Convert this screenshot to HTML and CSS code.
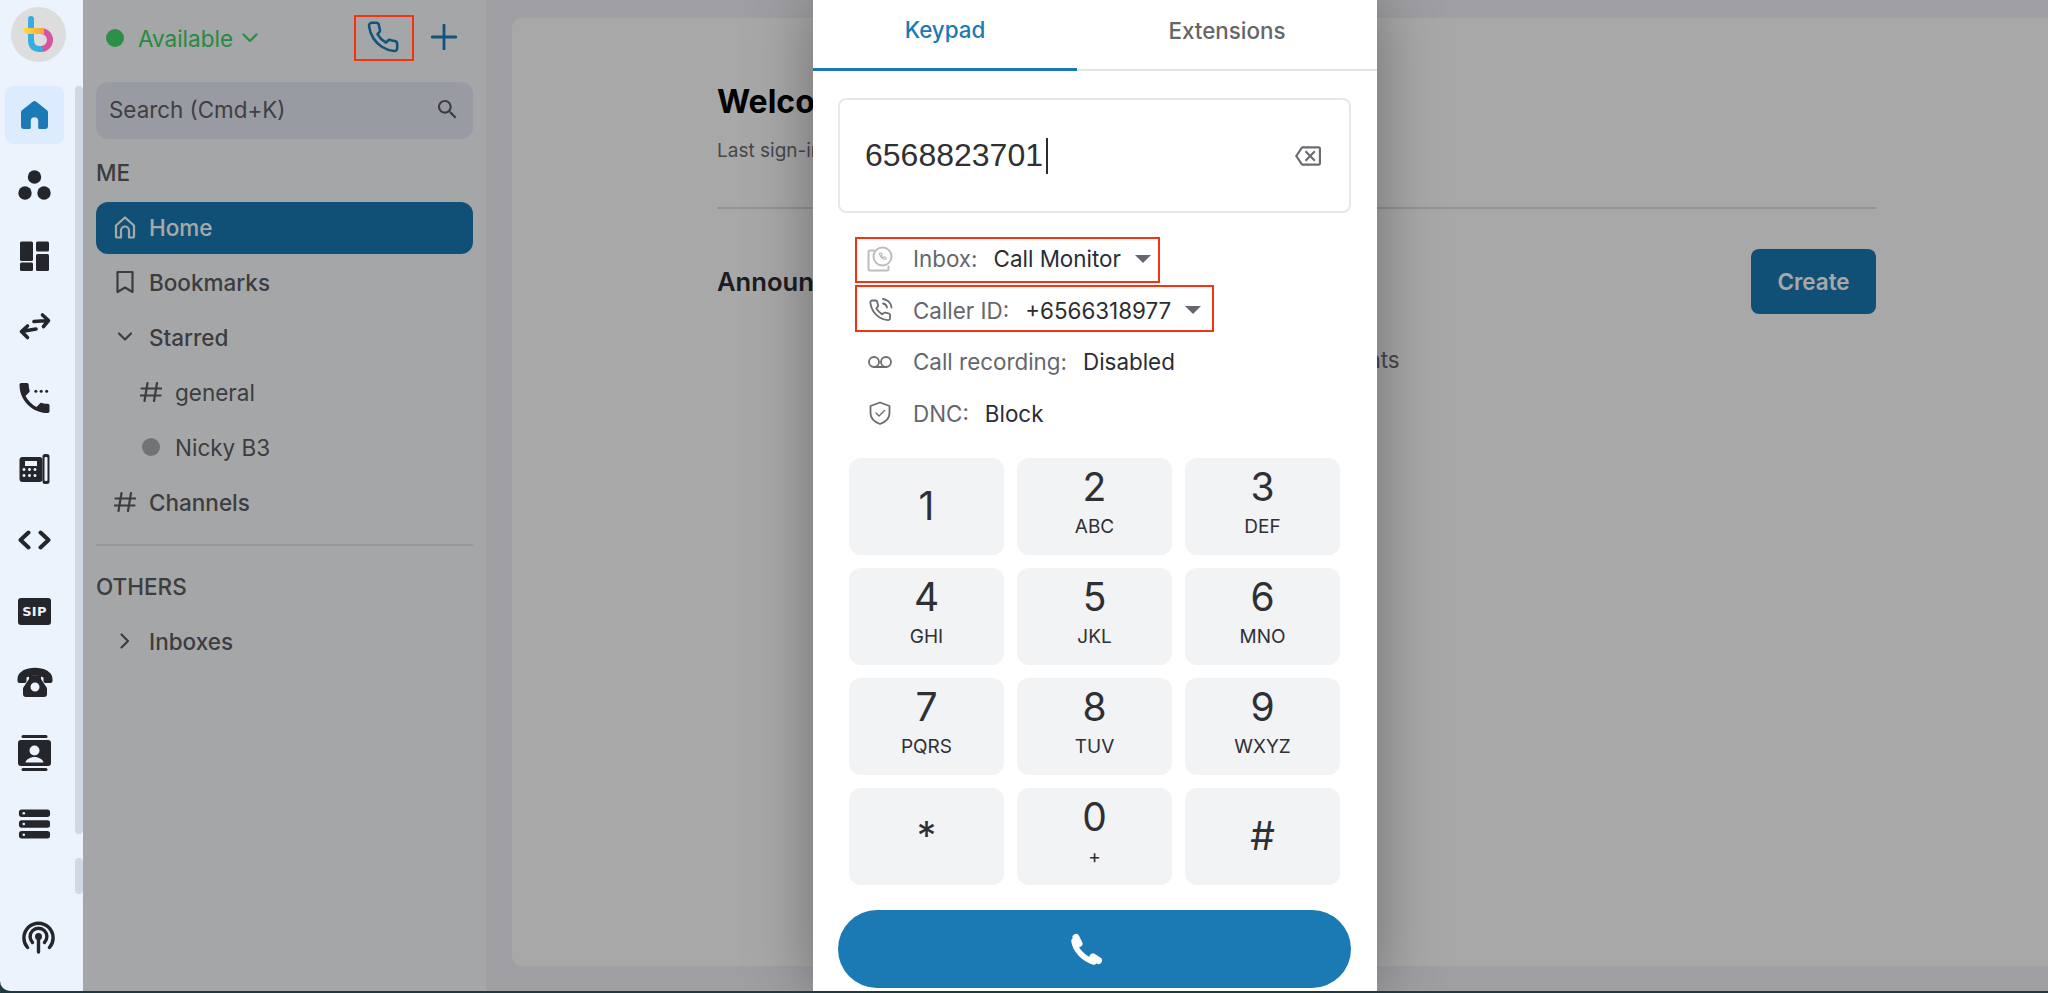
FILE: index.html
```html
<!DOCTYPE html>
<html lang="en">
<head>
<meta charset="utf-8">
<title>Dialer</title>
<link rel="stylesheet" href="styles.css">
</head>
<body>
<div class="app">
  <aside class="rail">
    <div class="rail-main">
      <div class="logo">
        <svg class="logo-mark" viewBox="0 0 55 55" fill="none">
          <defs><linearGradient id="ly" x1="0" x2="1" y1="0" y2="0"><stop offset="0" stop-color="#ffdc3c"/><stop offset="1" stop-color="#f7a63c"/></linearGradient></defs>
          <path d="M30 24a9 9 0 0 1 0 18h-3" stroke="#d556a0" stroke-width="6"/>
          <path d="M20 12V33Q20 42 29 42" stroke="#38aee0" stroke-width="6" stroke-linecap="round"/>
          <path d="M11.500 21H33V27H15Z" fill="url(#ly)"/>
        </svg>
      </div>
      <nav class="rail-nav">
        <a class="rail-item is-active"><svg class="ri" viewBox="0 0 30 30"><path fill="#1b7ab3" d="M13.200 1.700 2.500 10.300A3 3 0 0 0 1.500 12.500V26a3 3 0 0 0 3 3h5.300a1.500 1.500 0 0 0 1.500-1.500V21a3.700 3.700 0 0 1 7.400 0v6.500a1.500 1.500 0 0 0 1.500 1.500h5.300a3 3 0 0 0 3-3V12.500a3 3 0 0 0-1-2.200L16.800 1.700a2.800 2.800 0 0 0-3.600 0z"/></svg></a>
        <a class="rail-item"><svg class="ri" viewBox="0 0 33 30"><circle cx="16.500" cy="7" r="6.700" class="ink"/><circle cx="7" cy="23" r="6.700" class="ink"/><circle cx="26" cy="23" r="6.700" class="ink"/></svg></a>
        <a class="rail-item"><svg class="ri" viewBox="0 0 30 30"><rect x="0.500" y="0.500" width="13" height="19.500" rx="1.500" class="ink"/><rect x="16.500" y="0.500" width="13" height="10" rx="1.500" class="ink"/><rect x="0.500" y="21.500" width="13" height="8.500" rx="1.500" class="ink"/><rect x="16.500" y="13" width="13" height="17" rx="1.500" class="ink"/></svg></a>
        <a class="rail-item"><svg class="ri" viewBox="0 0 33 30" fill="none" stroke="#24262b" stroke-width="3.600" stroke-linecap="round" stroke-linejoin="round"><path d="M16 9.500 30 8.500M24.500 3 30.500 8.500 25.500 14.500"/><path d="M18 17 3.500 19.500M9.500 14 3.500 19.500 9.500 25.500"/></svg></a>
        <a class="rail-item"><svg class="ri" viewBox="3 3 18 18"><path class="ink" d="M6.620 10.790c1.440 2.830 3.760 5.140 6.590 6.590l2.200-2.200c.27-.27.670-.36 1.020-.24 1.120.37 2.330.57 3.570.57.550 0 1 .45 1 1V20c0 .55-.45 1-1 1-9.390 0-17-7.610-17-17 0-.55.45-1 1-1h3.500c.55 0 1 .45 1 1 0 1.250.2 2.450.57 3.570.11.350.03.740-.25 1.020l-2.200 2.200z"/><circle class="ink" cx="12.800" cy="8" r=".9"/><circle class="ink" cx="16" cy="8" r=".9"/><circle class="ink" cx="19.300" cy="8" r=".9"/></svg></a>
        <a class="rail-item"><svg class="ri" viewBox="0 0 30 30"><path class="ink" fill-rule="evenodd" d="M3 3h17a3 3 0 0 1 3 3v19a3 3 0 0 1-3 3H3a3 3 0 0 1-3-3V6a3 3 0 0 1 3-3zm2.500 4v5h12V7zM6 15.500a1.500 1.500 0 1 0 0 .01zm5.500 0a1.500 1.500 0 1 0 0 .01zm5.500 0a1.500 1.500 0 1 0 0 .01zM6 21.500a1.500 1.500 0 1 0 0 .01zm5.500 0a1.500 1.500 0 1 0 0 .01zm5.500 0a1.500 1.500 0 1 0 0 .01z"/><rect class="ink" x="23" y="0" width="7" height="30" rx="2.500"/><rect x="25" y="3" width="3" height="24" rx="1" fill="#ecf3fd"/></svg></a>
        <a class="rail-item"><svg class="ri" viewBox="0 0 33 20" fill="none" stroke="#24262b" stroke-width="4" stroke-linecap="round" stroke-linejoin="round"><path d="M10.500 2.500 2.500 10l8 7.500"/><path d="M22.500 2.500 30.500 10l-8 7.500"/></svg></a>
        <a class="rail-item"><div class="sip-badge">SIP</div></a>
        <a class="rail-item"><svg class="ri ri-wide" viewBox="0 0 36 30"><path class="ink" d="M0.500 12C0.500 -3 35.500 -3 35.500 12v2a2 2 0 0 1-2 2h-5a2 2 0 0 1-2-2v-3.500c-5-2.500-12-2.500-17 0V14a2 2 0 0 1-2 2h-5a2 2 0 0 1-2-2z"/><path class="ink" fill-rule="evenodd" d="M12 8.500h12V12l6 9v6a3 3 0 0 1-3 3H9a3 3 0 0 1-3-3v-6l6-9zM18 15.500a4.500 4.500 0 1 0 0 9 4.500 4.500 0 0 0 0-9z"/></svg></a>
        <a class="rail-item"><svg class="ri ri-tall" viewBox="0 0 33 36"><rect class="ink" x="3.500" y="0" width="26" height="3" rx="1.500"/><rect class="ink" x="3.500" y="33" width="26" height="3" rx="1.500"/><path class="ink" fill-rule="evenodd" d="M3 5h27a3 3 0 0 1 3 3v20a3 3 0 0 1-3 3H3a3 3 0 0 1-3-3V8a3 3 0 0 1 3-3zM16.500 10.500a5 5 0 1 0 0 10 5 5 0 0 0 0-10zM7.500 27.500h18c0-3-5-5.500-9-5.500s-9 2.500-9 5.500z"/></svg></a>
        <a class="rail-item"><svg class="ri" viewBox="0 0 30 28"><rect class="ink" x="0.500" y="0.500" width="29" height="7" rx="2.500"/><rect class="ink" x="0.500" y="10.500" width="29" height="7" rx="2.500"/><rect class="ink" x="0.500" y="20.500" width="29" height="7" rx="2.500"/><circle cx="5" cy="4" r="1.200" fill="#ecf3fd"/><circle cx="5" cy="14" r="1.200" fill="#ecf3fd"/><circle cx="5" cy="24" r="1.200" fill="#ecf3fd"/></svg></a>
      </nav>
      <a class="rail-foot"><svg class="ri-foot" viewBox="0 0 33 33" fill="none" stroke="#24262b" stroke-width="3.400" stroke-linecap="round"><path d="M5.500 26.500a14.600 14.600 0 1 1 22 0"/><path d="M10.500 21.500a8.400 8.400 0 1 1 12 0"/><path d="M16.500 16v15"/><circle cx="16.500" cy="15.500" r="1.800" fill="#24262b"/></svg></a>
    </div>
    <div class="rail-track"><span class="thumb thumb-long"></span><span class="thumb thumb-short"></span></div>
  </aside>

  <aside class="sidebar">
    <header class="side-top">
      <span class="status-dot"></span>
      <span class="status-text">Available</span>
      <svg class="status-chev" viewBox="0 0 16 10" fill="none"><path d="M1.500 1.500 8 8l6.500-6.500"/></svg>
      <div class="side-actions">
        <svg class="top-phone" viewBox="0 0 24 24" fill="none"><path d="M22 16.920v3a2 2 0 0 1-2.180 2 19.790 19.790 0 0 1-8.630-3.070 19.500 19.500 0 0 1-6-6 19.790 19.790 0 0 1-3.070-8.670A2 2 0 0 1 4.110 2h3a2 2 0 0 1 2 1.720 12.840 12.840 0 0 0 .7 2.810 2 2 0 0 1-.45 2.110L8.090 9.910a16 16 0 0 0 6 6l1.270-1.270a2 2 0 0 1 2.110-.45 12.840 12.840 0 0 0 2.810.7A2 2 0 0 1 22 16.920z"/></svg>
        <svg class="top-plus" viewBox="0 0 24 24" fill="none"><path d="M12 1v22M1 12h22"/></svg>
      </div>
    </header>
    <div class="search">
      <span>Search (Cmd+K)</span>
      <svg class="search-icon" viewBox="3 3 18 18"><path d="M15.500 14h-.79l-.28-.27C15.410 12.590 16 11.110 16 9.500 16 5.910 13.090 3 9.500 3S3 5.910 3 9.500 5.910 16 9.500 16c1.610 0 3.090-.59 4.230-1.570l.27.28v.79l5 4.990L20.490 19l-4.990-5zm-6 0C7.010 14 5 11.990 5 9.500S7.010 5 9.500 5 14 7.010 14 9.500 11.990 14 9.500 14z"/></svg>
    </div>
    <div class="section-label label-me">ME</div>
    <ul class="side-list">
      <li class="side-row is-current"><svg class="row-icon" viewBox="0 0 22 24" fill="none"><path d="M2 10.500 11 2.500l9 8V21a1.500 1.500 0 0 1-1.500 1.500H15V15.500a4 4 0 0 0-8 0v7H3.500A1.500 1.500 0 0 1 2 21z"/></svg><span>Home</span></li>
      <li class="side-row"><svg class="row-icon" viewBox="0 0 22 24" fill="none"><path d="M3.500 2h15v20L11 17.500 3.500 22z"/></svg><span>Bookmarks</span></li>
      <li class="side-row"><svg class="row-icon" viewBox="0 0 22 24" fill="none"><path d="M5 8.500 11 14.500l6-6"/></svg><span>Starred</span></li>
      <li class="side-row row-sub"><svg class="row-icon" viewBox="0 0 22 22" fill="none"><path d="M7.500 2 4.500 20M17 2l-3 18M1.500 7.500h20M.5 14.500h20"/></svg><span>general</span></li>
      <li class="side-row row-sub"><span class="presence"></span><span>Nicky B3</span></li>
      <li class="side-row"><svg class="row-icon" viewBox="0 0 22 22" fill="none"><path d="M7.500 2 4.500 20M17 2l-3 18M1.500 7.500h20M.5 14.500h20"/></svg><span>Channels</span></li>
    </ul>
    <div class="side-rule"></div>
    <div class="section-label label-others">OTHERS</div>
    <ul class="side-list list-others">
      <li class="side-row"><svg class="row-icon" viewBox="0 0 22 24" fill="none"><path d="M7.500 5.500 14 12l-6.500 6.500"/></svg><span>Inboxes</span></li>
    </ul>
  </aside>

  <main class="main">
    <section class="card">
      <h1 class="welcome">Welcome</h1>
      <p class="last-sign">Last sign-in</p>
      <div class="card-rule"></div>
      <div class="ann-head">
        <h2>Announcements</h2>
        <button class="create">Create</button>
      </div>
      <p class="ann-empty">No announcements</p>
    </section>
  </main>

  <div class="backdrop"></div>

  <div class="dialog">
    <div class="tabs">
      <div class="tab tab-on">Keypad</div>
      <div class="tab tab-off">Extensions</div>
    </div>
    <div class="dial-input">
      <span class="dial-number">6568823701</span><span class="caret"></span>
      <svg class="backspace" viewBox="0 0 24 24"><path d="M22 3H7c-.69 0-1.230.35-1.590.88L0 12l5.410 8.110c.36.53.9.89 1.590.89h15c1.100 0 2-.9 2-2V5c0-1.100-.9-2-2-2zm0 16H7.070L2.400 12l4.660-7H22v14zM10.410 17 14 13.410 17.590 17 19 15.590 15.410 12 19 8.410 17.590 7 14 10.590 10.410 7 9 8.410 12.590 12 9 15.590z"/></svg>
    </div>
    <div class="meta">
      <div class="meta-row">
        <svg class="meta-icon icon-soft" viewBox="0 0 26 26" fill="none"><path d="M7 4.500H3a1.500 1.500 0 0 0-1.500 1.500v17A1.500 1.500 0 0 0 3 24.500h17a1.500 1.500 0 0 0 1.500-1.500v-2.500"/><circle cx="15.500" cy="10.500" r="9"/><path d="M12.500 7c0 3.500 3 6.500 6.500 6.500v-2l-2-.6-.8.8c-1-.5-1.600-1.100-2-2l.8-.8-.5-1.900z" stroke-width="1.200"/></svg>
        <span class="meta-label">Inbox:</span><span class="meta-value">Call Monitor</span><span class="drop"></span>
      </div>
      <div class="meta-row">
        <svg class="meta-icon" viewBox="0 0 26 26" fill="none"><path d="M23 18.200v3a2 2 0 0 1-2.200 2 19.500 19.500 0 0 1-8.500-3 19.200 19.200 0 0 1-6-6 19.500 19.500 0 0 1-3-8.600A2 2 0 0 1 5.300 3.500h3a2 2 0 0 1 2 1.700c.1 1 .4 1.900.7 2.800a2 2 0 0 1-.5 2.100L9.300 11.400a16 16 0 0 0 6 6l1.300-1.300a2 2 0 0 1 2.100-.4c.9.300 1.800.6 2.800.7a2 2 0 0 1 1.700 2z"/><path d="M16 6.500a5 5 0 0 1 4 4M16 2a9.500 9.500 0 0 1 8.500 8.500"/></svg>
        <span class="meta-label">Caller ID:</span><span class="meta-value">+6566318977</span><span class="drop"></span>
      </div>
      <div class="meta-row">
        <svg class="meta-icon" viewBox="0 0 26 26" fill="none"><circle cx="7" cy="13" r="5"/><circle cx="19" cy="13" r="5"/><path d="M7 18h12"/></svg>
        <span class="meta-label">Call recording:</span><span class="meta-value">Disabled</span>
      </div>
      <div class="meta-row">
        <svg class="meta-icon" viewBox="0 0 26 26" fill="none"><path d="M13 2.500 22.500 6v7c0 5.500-4 9-9.500 11C7.500 22 3.500 18.500 3.500 13V6z"/><path d="M9 13l3 3 5.500-5.500" stroke-width="1.400"/></svg>
        <span class="meta-label">DNC:</span><span class="meta-value">Block</span>
      </div>
      <span class="mark mark-inbox"></span>
      <span class="mark mark-caller"></span>
    </div>
    <div class="keypad">
      <button class="key key-solo">1</button>
      <button class="key"><b>2</b><small>ABC</small></button>
      <button class="key"><b>3</b><small>DEF</small></button>
      <button class="key"><b>4</b><small>GHI</small></button>
      <button class="key"><b>5</b><small>JKL</small></button>
      <button class="key"><b>6</b><small>MNO</small></button>
      <button class="key"><b>7</b><small>PQRS</small></button>
      <button class="key"><b>8</b><small>TUV</small></button>
      <button class="key"><b>9</b><small>WXYZ</small></button>
      <button class="key key-solo">*</button>
      <button class="key"><b>0</b><small>+</small></button>
      <button class="key key-solo">#</button>
    </div>
    <button class="call">
      <svg class="call-icon" viewBox="0 0 34 34" fill="none"><path d="M7 5.500 10 11.500" stroke-width="7"/><path d="M5 9C6 18 15 27 25 30" stroke-width="5.500"/><path d="M24 25 29.500 28.500" stroke-width="7"/></svg>
    </button>
  </div>

  <span class="mark mark-phone"></span>
</div>
</body>
</html>
```
FILE: styles.css
```css
* { box-sizing: border-box; }
html, body { margin: 0; height: 993px; overflow: hidden; background: #1d3a42; }
body { font-family: Inter, "Noto Sans", sans-serif; color: #5b5d61; }
ul { list-style: none; margin: 0; padding: 0; }
button { font-family: inherit; border: 0; cursor: pointer; }

.app { position: relative; display: flex; width: 2048px; height: 991px; overflow: hidden; border-bottom-left-radius: 10px; }

/* rail */
.rail { position: relative; z-index: 3; flex: 0 0 83px; display: flex; background: #ecf3fd; }
.rail-main { flex: 1; display: flex; flex-direction: column; }
.logo { width: 55px; height: 55px; margin: 7px 0 0 11px; border-radius: 50%; background: #dddddd; flex: none; }
.logo-mark { display: block; width: 55px; height: 55px; }
.rail-nav { display: flex; flex-direction: column; gap: 13px; margin: 24px 0 0 5px; }
.rail-item { width: 59px; height: 58px; padding-bottom: 2px; display: flex; align-items: center; justify-content: center; border-radius: 8px; }
.is-active { padding-bottom: 0; background: #dcebfd; }
.ri { display: block; width: 33px; height: 30px; }
.ri-tall { height: 36px; }
.ri-wide { width: 36px; }
.ink { fill: #24262b; }
.sip-badge { width: 33px; height: 27px; border-radius: 3px; background: #24262b; color: #ecf3fd; font: 800 13px/27px "DejaVu Sans", sans-serif; text-align: center; letter-spacing: .3px; }
.rail-foot { display: block; margin: auto 0 37px 22px; width: 33px; height: 33px; }
.ri-foot { display: block; width: 33px; height: 33px; }
.rail-track { flex: 0 0 8px; display: flex; flex-direction: column; gap: 24px; padding-top: 86px; }
.thumb { display: block; background: #cfd8e3; border-radius: 4px; }
.thumb-long { height: 748px; }
.thumb-short { height: 36px; }

/* sidebar */
.sidebar { flex: 0 0 403px; padding: 0 13px; background: #fbfcff; }
.side-top { height: 76px; display: flex; align-items: center; padding-left: 10px; }
.status-dot { width: 18px; height: 18px; border-radius: 50%; background: #43d96c; margin-right: 14px; }
.status-text { font-size: 22.500px; color: #3ad264; }
.status-chev { width: 16px; height: 10px; margin-left: 9px; stroke: #43d96c; stroke-width: 2.400; stroke-linecap: round; stroke-linejoin: round; }
.side-actions { margin-left: auto; display: flex; align-items: center; gap: 31px; padding: 0 16px 2px 0; }
.top-phone { width: 34px; height: 34px; stroke: #1d7eb8; stroke-width: 1.800; stroke-linejoin: round; }
.top-plus { width: 26px; height: 26px; stroke: #1d7eb8; stroke-width: 2.600; stroke-linecap: round; }
.search { height: 57px; margin-top: 6px; padding: 0 16px 2px 13px; display: flex; align-items: center; justify-content: space-between; border-radius: 12px; background: #e8ecf7; font-size: 22.400px; color: #5f6166; }
.search-icon { width: 19px; height: 19px; fill: #5b5d61; }
.section-label { height: 34px; line-height: 34px; font-size: 22.500px; font-weight: 500; color: #5b5d61; }
.label-me { margin: 17px 0 12px; }
.label-others { margin: 24px 0 12px; }
.side-list { display: flex; flex-direction: column; gap: 3px; }
.side-row { height: 52px; padding: 0 0 2px 18px; display: flex; align-items: center; gap: 13px; font-size: 22.500px; font-weight: 500; border-radius: 12px; color: #5b5d61; }
.row-icon { flex: none; width: 22px; height: 24px; stroke: #5b5d61; stroke-width: 2.200; stroke-linecap: round; stroke-linejoin: round; }
.row-sub { padding-left: 44px; font-weight: 400; }
.is-current { background: #1b7ab3; color: #ffffff; }
.is-current .row-icon { stroke: #ffffff; }
.presence { flex: none; width: 18px; height: 18px; margin: 0 2px; border-radius: 50%; background: #adafb2; }
.side-rule { height: 2px; margin-top: 15px; background: #e6e8e9; }

/* main */
.main { flex: 1; min-width: 0; padding: 18px 0 25px 26px; background: #f1f2f8; border-bottom: 1px solid #f8f8f8; }
.card { height: 948px; padding: 66px 172px 0 205px; background: #ffffff; border-radius: 10px 0 0 10px; }
.welcome { margin: 0; font-size: 32px; line-height: 36px; font-weight: 700; color: #000000; }
.last-sign { margin: 17px 0 0; font-size: 19px; line-height: 28px; color: #6b6e73; }
.card-rule { height: 2px; margin-top: 42px; background: #dedfe1; }
.ann-head { display: flex; align-items: center; justify-content: space-between; margin-top: 40px; }
.ann-head h2 { margin: 0; font-size: 25.600px; font-weight: 600; color: #2b2d33; }
.create { width: 125px; height: 65px; border-radius: 8px; background: #1b7ab3; color: #ffffff; font-size: 22.400px; font-weight: 600; }
.ann-empty { margin: 31px 0 0; text-align: center; font-size: 22.400px; line-height: 30px; color: #6b6e73; }

/* overlay and dialog */
.backdrop { position: absolute; inset: 0; z-index: 1; background: rgba(0, 0, 0, .34); }
.dialog { position: absolute; z-index: 2; left: 813px; top: 0; width: 564px; height: 991px; padding: 0 26px; background: #ffffff; box-shadow: 0 0 60px rgba(0, 0, 0, .35); }
.tabs { display: flex; height: 71px; margin: 0 -26px; border-bottom: 2px solid #e3e4e6; }
.tab { display: flex; align-items: center; justify-content: center; padding-bottom: 9px; font-size: 22.400px; font-weight: 500; }
.tab-on { flex: 0 0 264px; height: 71px; color: #1b7ab3; border-bottom: 3px solid #1b7ab3; }
.tab-off { flex: 1; color: #64666a; }
.dial-input { height: 115px; margin: 27px 0 0 -1px; padding: 0 25px; display: flex; align-items: center; border: 2px solid #e6e7e9; border-radius: 8px; color: #2f3034; }
.dial-number { font: 32px "Liberation Sans", Arial, sans-serif; }
.caret { width: 2px; height: 36px; margin-left: 3px; background: #2b2d33; }
.backspace { margin-left: auto; margin-right: 1px; width: 30px; height: 26px; fill: #6a6c70; }
.meta { position: relative; margin: 20px 0 0 16px; }
.meta-row { height: 51.500px; display: flex; align-items: center; padding-left: 12px; font-size: 22.400px; }
.meta-icon { flex: none; width: 26px; height: 26px; margin-right: 20px; stroke: #6a6c70; stroke-width: 1.800; stroke-linecap: round; stroke-linejoin: round; }
.icon-soft { stroke: #bcbdbe; stroke-width: 2; }
.meta-label { color: #65676c; margin-right: 16px; }
.meta-value { color: #2b2d33; }
.drop { width: 0; height: 0; margin-left: 14px; border-left: 8px solid transparent; border-right: 8px solid transparent; border-top: 8px solid #65676c; }
.mark { position: absolute; z-index: 4; border: 2px solid #f5330f; }
.mark-inbox { left: 0; top: 4px; width: 305px; height: 46px; }
.mark-caller { left: 0; top: 52px; width: 359px; height: 47px; }
.mark-phone { left: 354px; top: 15px; width: 60px; height: 46px; }
.keypad { display: grid; grid-template-columns: repeat(3, 155px); grid-auto-rows: 97px; gap: 13px; margin: 19px 0 0 10px; }
.key { display: flex; flex-direction: column; align-items: center; justify-content: flex-start; padding: 6px 0 0; border-radius: 12px; background: #f2f3f5; color: #2f3034; }
.key b { font-size: 39px; line-height: 46px; font-weight: 400; }
.key small { margin-top: 5px; font-size: 19px; line-height: 24px; }
.key-solo { justify-content: center; padding: 0 0 2px; font-size: 39px; }
.call { display: flex; align-items: center; justify-content: center; width: 513px; height: 78px; margin: 25px 0 0 -1px; padding: 0 18px 0 0; border-radius: 39px; background: #1b7ab3; }
.call-icon { width: 34px; height: 34px; stroke: #ffffff; stroke-linecap: round; }
```
